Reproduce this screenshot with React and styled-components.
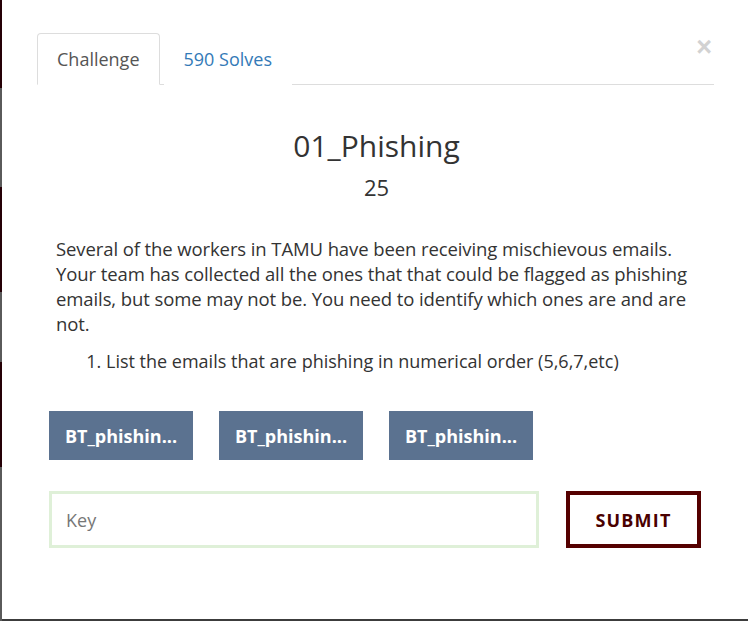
import React from 'react'
import styled, {createGlobalStyle} from 'styled-components'

const GlobalStyle = createGlobalStyle`
  html, body {
    margin: 0;
    padding: 0;
    background: #fff;
  }
  body {
    font-family: "Open Sans", "Noto Sans", sans-serif;
    color: #333;
  }
`

const Page = styled.div`
  display: flex;
  width: 748px;
  height: 621px;
  overflow: hidden;
`

const Backdrop = styled.div`
  display: flex;
  flex-direction: column;
  width: 2px;
  flex-shrink: 0;
`

const Shade = styled.div`
  height: ${p => p.h}px;
  flex-shrink: 0;
  background: ${p => (p.dark ? '#250006' : '#5a5a5a')};
  ${p => p.grow && 'flex: 1;'}
`

const Modal = styled.div`
  flex: 1;
  display: flex;
  flex-direction: column;
  background: #fff;
  border-bottom: 2px solid #3c3c3c;
  padding: 33px 32px 0 35px;
  position: relative;
`

const Close = styled.span`
  position: absolute;
  top: 34px;
  right: 36px;
  font-family: "Liberation Sans", Arial, sans-serif;
  font-size: 27px;
  font-weight: 700;
  color: #d2d2d2;
  line-height: 1;
`

const Tabs = styled.ul`
  display: flex;
  list-style: none;
  margin: 0;
  padding: 0;
  border-bottom: 1px solid #ddd;
  width: 677px;
`

const Tab = styled.li`
  margin-bottom: -1px;
  height: 52px;
  box-sizing: border-box;
  padding: 0 19px;
  display: flex;
  align-items: center;
  font-size: 18px;
  border: 1px solid ${p => (p.active ? '#ddd' : 'transparent')};
  border-bottom-color: ${p => (p.active ? '#fff' : 'transparent')};
  border-radius: 4px 4px 0 0;
  background: #fff;
  color: ${p => (p.active ? '#555' : '#337ab7')};
  margin-right: 4px;
`

const Title = styled.h2`
  margin: 43px 0 0;
  text-align: center;
  font-size: 30px;
  font-weight: 400;
  line-height: 1.2;
  color: #333;
`

const Value = styled.h4`
  margin: 10px 0 0;
  text-align: center;
  font-size: 22px;
  font-weight: 400;
  line-height: 1.2;
  color: #333;
`

const Description = styled.div`
  padding: 0 29px 0 19px;
  margin-top: 36px;
  line-height: 25px;
  color: #333;

  p {
    margin: 0;
    font-size: 18.5px;
    letter-spacing: -0.1px;
  }

  ol {
    margin: 13px 0 0;
    padding-left: 50px;
    font-size: 18px;
  }
`

const Files = styled.div`
  display: flex;
  gap: 26px;
  padding: 0 12px;
  margin-top: 37px;
`

const FileButton = styled.a`
  width: 144px;
  height: 49px;
  display: flex;
  align-items: center;
  justify-content: center;
  background: #5b7290;
  color: #fff;
  font-size: 18px;
  font-weight: 700;
  text-decoration: none;
`

const SubmitRow = styled.div`
  display: flex;
  gap: 27px;
  padding: 0 15px 0 12px;
  margin-top: 31px;
`

const KeyInput = styled.input`
  flex: 1;
  height: 57px;
  box-sizing: border-box;
  border: 3px solid #dff0d8;
  padding: 0 14px;
  font-family: "Open Sans", "Noto Sans", sans-serif;
  font-size: 18px;
  outline: none;
  color: #555;

  &::placeholder {
    color: #777;
  }
`

const SubmitButton = styled.button`
  width: 135px;
  height: 57px;
  box-sizing: border-box;
  border: 4px solid #550000;
  background: #fff;
  color: #4a0000;
  font-family: "Open Sans", "Noto Sans", sans-serif;
  font-size: 18px;
  font-weight: 700;
  letter-spacing: 1.2px;
`

const shades = [
  {h: 88, dark: true},
  {h: 99},
  {h: 105, dark: true},
  {h: 70},
  {h: 105, dark: true},
  {grow: true},
]

const files = ['BT_phishin...', 'BT_phishin...', 'BT_phishin...']

export default function App() {
  return (
    <>
      <GlobalStyle />
      <Page>
        <Backdrop>
          {shades.map((s, i) => (
            <Shade key={i} {...s} />
          ))}
        </Backdrop>
        <Modal>
          <Close>×</Close>
          <Tabs>
            <Tab active>Challenge</Tab>
            <Tab>590 Solves</Tab>
          </Tabs>
          <Title>01_Phishing</Title>
          <Value>25</Value>
          <Description>
            <p>
              Several of the workers in TAMU have been receiving mischievous emails. Your team has
              collected all the ones that that could be flagged as phishing emails, but some may not
              be. You need to identify which ones are and are not.
            </p>
            <ol>
              <li>List the emails that are phishing in numerical order (5,6,7,etc)</li>
            </ol>
          </Description>
          <Files>
            {files.map((f, i) => (
              <FileButton key={i}>{f}</FileButton>
            ))}
          </Files>
          <SubmitRow>
            <KeyInput placeholder="Key" />
            <SubmitButton>SUBMIT</SubmitButton>
          </SubmitRow>
        </Modal>
      </Page>
    </>
  )
}
